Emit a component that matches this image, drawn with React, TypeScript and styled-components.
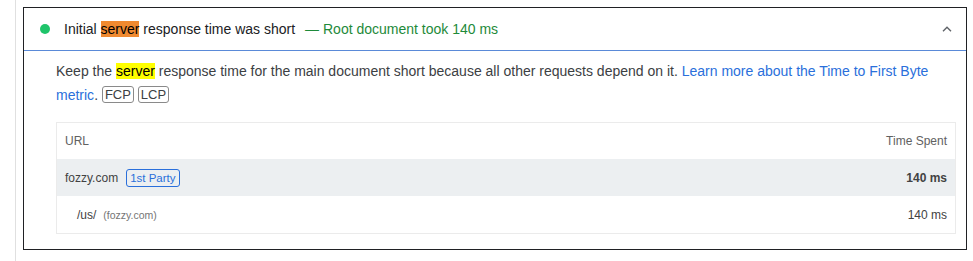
import React from "react";
import styled, { createGlobalStyle } from "styled-components";

const GlobalStyle = createGlobalStyle`
  html, body {
    margin: 0;
    padding: 0;
    background: #fff;
  }
  body {
    font-family: "Liberation Sans", Arial, sans-serif;
    color: #202124;
  }
`;

const Page = styled.div`
  padding-left: 15px;
  height: 261px;
  box-sizing: border-box;
`;

const Rail = styled.div`
  border-left: 1px solid #e0e0e0;
  height: 100%;
  padding: 7px 6px 0 7px;
  box-sizing: border-box;
`;

const Audit = styled.div`
  border: 1px solid #202124;
`;

const Header = styled.div`
  display: flex;
  align-items: center;
  height: 42px;
  padding: 0 14px 0 16px;
  border-bottom: 1px solid #5a8ad8;
  font-size: 14px;
`;

const Dot = styled.span`
  width: 10px;
  height: 10px;
  border-radius: 50%;
  background: #1fc46a;
  flex: none;
  margin-right: 14px;
`;

const Title = styled.span`
  color: #202124;
`;

const DisplayValue = styled.span`
  color: #1e8a3a;
  margin-left: 10px;
`;

const Mark = styled.mark<{ $current?: boolean }>`
  background: ${(p) => (p.$current ? "#f08a30" : "#ffff00")};
  color: #000;
  padding: 0;
`;

const Chevron = styled.svg`
  margin-left: auto;
  width: 10px;
  height: 6px;
  flex: none;
`;

const Body = styled.div`
  padding: 8px 10px 15px 32px;
`;

const Description = styled.div`
  font-size: 14px;
  line-height: 24px;
  color: #3c4043;
`;

const Link = styled.a`
  color: #2a6fdb;
  text-decoration: none;
`;

const Tag = styled.span`
  display: inline-block;
  border: 1px solid #8a8a8a;
  border-radius: 3px;
  padding: 0 2px;
  font-size: 13px;
  line-height: 15px;
  color: #3c4043;
  vertical-align: 1px;
`;

const Table = styled.table`
  margin-top: 15px;
  width: 100%;
  border-collapse: collapse;
  border: 1px solid #ebebeb;
  font-size: 12px;
`;

const Th = styled.th<{ $right?: boolean }>`
  height: 36px;
  padding: 0 8px;
  font-weight: normal;
  color: #616161;
  text-align: ${(p) => (p.$right ? "right" : "left")};
`;

const Row = styled.tr<{ $group?: boolean }>`
  background: ${(p) => (p.$group ? "#eceff1" : "#fff")};
`;

const Td = styled.td<{ $right?: boolean; $bold?: boolean; $indent?: boolean }>`
  height: 37px;
  padding: 0 8px 0 ${(p) => (p.$indent ? "20px" : "8px")};
  color: #424242;
  text-align: ${(p) => (p.$right ? "right" : "left")};
  font-weight: ${(p) => (p.$bold ? "bold" : "normal")};
  white-space: nowrap;
`;

const Party = styled.span`
  display: inline-block;
  margin-left: 8px;
  border: 1px solid #2a6fdb;
  border-radius: 3px;
  padding: 1px 3px;
  line-height: 14px;
  font-size: 11.5px;
  color: #2a6fdb;
`;

const Origin = styled.span`
  margin-left: 7px;
  font-size: 10.5px;
  color: #757575;
`;

export default function App() {
  return (
    <>
      <GlobalStyle />
      <Page>
        <Rail>
          <Audit>
            <Header>
              <Dot />
              <Title>
                Initial <Mark $current>server</Mark> response time was short
              </Title>
              <DisplayValue>— Root document took 140 ms</DisplayValue>
              <Chevron viewBox="0 0 10 6">
                <path d="M1 5.2 L5 1.2 L9 5.2" fill="none" stroke="#5f6368" strokeWidth="1.4" />
              </Chevron>
            </Header>
            <Body>
              <Description>
                Keep the <Mark>server</Mark> response time for the main document short because all other
                requests depend on it.{" "}
                <Link href="#">Learn more about the Time to First Byte metric</Link>.{" "}
                <Tag>FCP</Tag> <Tag>LCP</Tag>
              </Description>
              <Table>
                <thead>
                  <tr>
                    <Th>URL</Th>
                    <Th $right>Time Spent</Th>
                  </tr>
                </thead>
                <tbody>
                  <Row $group>
                    <Td>
                      fozzy.com<Party>1st Party</Party>
                    </Td>
                    <Td $right $bold>
                      140 ms
                    </Td>
                  </Row>
                  <Row>
                    <Td $indent>
                      /us/<Origin>(fozzy.com)</Origin>
                    </Td>
                    <Td $right>140 ms</Td>
                  </Row>
                </tbody>
              </Table>
            </Body>
          </Audit>
        </Rail>
      </Page>
    </>
  );
}
